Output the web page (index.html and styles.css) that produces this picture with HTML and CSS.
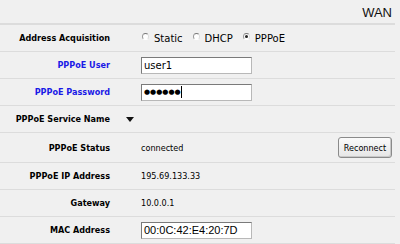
FILE: index.html
```html
<!DOCTYPE html>
<html lang="en">

<head>
    <meta charset="UTF-8">
    <title>WAN</title>
    <link rel="stylesheet" href="styles.css">
</head>

<body>
    <div class="page">
        <div class="page-title">WAN</div>

        <div class="row">
            <div class="label">Address Acquisition</div>
            <div class="mid"></div>
            <div class="value radios">
                <label><span class="radio"></span>Static</label>
                <label><span class="radio"></span>DHCP</label>
                <label><span class="radio checked"></span>PPPoE</label>
            </div>
        </div>

        <div class="row">
            <div class="label blue">PPPoE User</div>
            <div class="mid"></div>
            <div class="value"><div class="field">user1</div></div>
        </div>

        <div class="row">
            <div class="label blue">PPPoE Password</div>
            <div class="mid"></div>
            <div class="value"><div class="field dots">&#9679;&#9679;&#9679;&#9679;&#9679;&#9679;<span class="caret"></span></div></div>
        </div>

        <div class="row">
            <div class="label">PPPoE Service Name</div>
            <div class="mid"><span class="arrow"></span></div>
            <div class="value"></div>
        </div>

        <div class="row tall">
            <div class="label">PPPoE Status</div>
            <div class="mid"></div>
            <div class="value split">
                <span>connected</span>
                <button class="btn">Reconnect</button>
            </div>
        </div>

        <div class="row">
            <div class="label">PPPoE IP Address</div>
            <div class="mid"></div>
            <div class="value">195.69.133.33</div>
        </div>

        <div class="row">
            <div class="label">Gateway</div>
            <div class="mid"></div>
            <div class="value">10.0.0.1</div>
        </div>

        <div class="row">
            <div class="label">MAC Address</div>
            <div class="mid"></div>
            <div class="value"><div class="field mac">00:0C:42:E4:20:7D</div></div>
        </div>
    </div>
</body>

</html>
```

FILE: styles.css
```css
* {
    margin: 0;
    padding: 0;
    box-sizing: border-box;
}

body {
    font-family: 'DejaVu Sans Condensed', 'DejaVu Sans', Tahoma, sans-serif;
    background-color: #f0f0f0;
    color: #000;
    font-size: 9px;
}

.page {
    width: 395px;
}

/* Title */
.page-title {
    height: 25px;
    padding: 5px 3px 0 0;
    text-align: right;
    font-family: 'Liberation Sans', Arial, sans-serif;
    font-size: 13px;
    color: #111;
    border-bottom: 2px solid #dcdcdc;
}

/* Rows */
.row {
    display: grid;
    grid-template-columns: 110px 31px 1fr;
    align-items: center;
    height: 27px;
    border-bottom: 1px solid #dcdcdc;
}

.row.tall {
    height: 30px;
}

.label {
    text-align: right;
    font-weight: bold;
    white-space: nowrap;
}

.label.blue {
    color: #1a1ae6;
}

.mid {
    display: flex;
    justify-content: center;
}

.arrow {
    width: 0;
    height: 0;
    border-left: 4px solid transparent;
    border-right: 4px solid transparent;
    border-top: 5px solid #111;
    margin-left: 9px;
}

.split {
    display: flex;
    justify-content: space-between;
    align-items: center;
    padding-right: 3px;
}

/* Radios */
.radios {
    display: flex;
    font-family: 'DejaVu Sans', Tahoma, sans-serif;
    font-size: 10px;
}

.radios label {
    display: flex;
    align-items: flex-start;
    margin-right: 9px;
}

.radio {
    width: 7px;
    height: 7px;
    margin: 0 5px 0 1px;
    border-radius: 50%;
    border: 1px solid;
    border-color: #777 #ddd #fff #999;
    background: #fff;
    position: relative;
}

.radio.checked::after {
    content: '';
    position: absolute;
    left: 1px;
    top: 1px;
    width: 3px;
    height: 3px;
    border-radius: 50%;
    background: #222;
}

/* Inputs */
.field {
    width: 111px;
    height: 17px;
    background: #fff;
    border: 1px solid;
    border-color: #7a7a7a #b8b8b8 #b8b8b8 #7a7a7a;
    font-family: 'DejaVu Sans', Tahoma, sans-serif;
    font-size: 10px;
    line-height: 15px;
    padding-left: 2px;
    white-space: nowrap;
    overflow: hidden;
}

.field.dots {
    font-size: 7px;
}

.caret {
    display: inline-block;
    width: 1px;
    height: 12px;
    background: #000;
    vertical-align: middle;
}

.field.mac {
    font-family: 'Liberation Sans', Arial, sans-serif;
    font-size: 11px;
}

.btn {
    width: 54px;
    height: 21px;
    font-family: 'DejaVu Sans Condensed', Tahoma, sans-serif;
    font-size: 9px;
    background: linear-gradient(#fafafa, #e6e6e6);
    border: 1px solid #8a8a8a;
    border-radius: 3px;
    box-shadow: inset -1px -1px 0 #c8c8c8;
    color: #000;
}
```
